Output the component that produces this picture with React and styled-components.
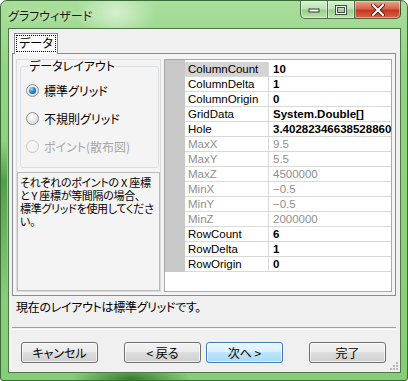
import React from "react";
import styled, { createGlobalStyle } from "styled-components";

const GlobalStyle = createGlobalStyle`
  html, body {
    margin: 0;
    padding: 0;
    background: #ffffff;
    overflow: hidden;
  }
  body {
    font-family: "Noto Sans CJK JP", "Liberation Sans", sans-serif;
  }
`;

const jp = `"Noto Sans CJK JP", "Liberation Sans", sans-serif`;
const latin = `"Liberation Sans", "Noto Sans CJK JP", sans-serif`;

const Window = styled.div`
  position: relative;
  width: 408px;
  height: 381px;
  box-sizing: border-box;
  display: flex;
  flex-direction: column;
  border: 1px solid #3c6a37;
  border-radius: 7px 7px 3px 3px;
  overflow: hidden;
  background:
    radial-gradient(ellipse 40px 26px at 115px 12px, rgba(255, 255, 255, 0.55), transparent),
    radial-gradient(ellipse 60px 14px at 130px 378px, rgba(20, 90, 20, 0.7), transparent),
    linear-gradient(180deg, transparent 140px, rgba(30, 120, 30, 0.55) 180px, transparent 300px) left / 6px 100% no-repeat,
    linear-gradient(180deg, #a9de9b 0%, #92d483 18%, #86cd77 100%);
`;

const TitleBar = styled.div`
  height: 27px;
  display: flex;
  align-items: flex-start;
  justify-content: space-between;
  padding-left: 7px;
`;

const Title = styled.div`
  font-family: ${jp};
  font-size: 12px;
  font-feature-settings: "palt" 1;
  line-height: 14px;
  margin-top: 8px;
  color: #1a1a1a;
  text-shadow: 0 0 6px rgba(255, 255, 255, 0.8);
`;

const Caption = styled.div`
  display: flex;
  margin-right: 6px;
`;

const CaptionButton = styled.div`
  height: 18px;
  width: ${(p) => p.$w}px;
  box-sizing: border-box;
  display: flex;
  align-items: center;
  justify-content: center;
  border: 1px solid rgba(40, 70, 40, 0.75);
  border-top: none;
  border-left-width: ${(p) => (p.$first ? 1 : 0)}px;
  border-radius: ${(p) => (p.$first ? "0 0 0 5px" : p.$last ? "0 0 5px 0" : "0")};
  background: ${(p) =>
    p.$close
      ? "linear-gradient(180deg, #e8a593 0%, #d7634b 45%, #c4361d 55%, #d3674c 100%)"
      : "linear-gradient(180deg, rgba(255,255,255,0.55) 0%, rgba(255,255,255,0.25) 45%, rgba(120,170,110,0.3) 55%, rgba(200,235,190,0.6) 100%)"};
  box-shadow: inset 0 0 0 1px rgba(255, 255, 255, 0.4);
`;

const Client = styled.div`
  position: relative;
  flex: 1;
  margin: 0 6px 7px 7px;
  border: 1px solid #4f7549;
  background: #f0f0f0;
  display: flex;
  flex-direction: column;
`;

const TabArea = styled.div`
  margin: 4px 4px 0 3px;
  display: flex;
  flex-direction: column;
`;

const TabStrip = styled.div`
  display: flex;
  padding-left: 2px;
  height: 20px;
`;

const Tab = styled.div`
  position: relative;
  z-index: 1;
  width: 44px;
  height: 21px;
  box-sizing: border-box;
  border: 1px solid #898c95;
  border-bottom: none;
  background: #fcfcfc;
  display: flex;
  align-items: flex-start;
  justify-content: center;
  padding-top: 2px;
`;

const TabLabel = styled.span`
  font-family: ${jp};
  font-size: 12px;
  font-feature-settings: "palt" 1;
  line-height: 14px;
  padding: 0 2px 1px;
  outline: 1px dotted #000;
  color: #000;
`;

const Panel = styled.div`
  height: 243px;
  box-sizing: border-box;
  border: 1px solid #898c95;
  background: #f4f4f4;
  display: flex;
  gap: 3px;
  padding: 5px 3px 3px 3px;
`;

const LeftPane = styled.div`
  width: 145px;
  box-sizing: border-box;
  border: 1px solid #dcdcdc;
  display: flex;
  flex-direction: column;
`;

const GroupBox = styled.fieldset`
  margin: 0 1px 0 3px;
  padding: 10px 0 0 5px;
  height: 108px;
  box-sizing: border-box;
  border: 1px solid #d5dfe5;
  border-radius: 3px;
  display: flex;
  flex-direction: column;
  gap: 12px;
`;

const Legend = styled.legend`
  font-family: ${jp};
  font-size: 12px;
  font-feature-settings: "palt" 1;
  line-height: 12px;
  padding: 0 1px;
  margin-left: 2px;
  color: #000;
`;

const RadioRow = styled.label`
  display: flex;
  align-items: center;
  gap: 5px;
  height: 16px;
  font-family: ${jp};
  font-size: 12px;
  font-feature-settings: "palt" 1;
  color: ${(p) => (p.$disabled ? "#a6a6a6" : "#000")};
`;

const Radio = styled.span`
  position: relative;
  width: 13px;
  height: 13px;
  box-sizing: border-box;
  border-radius: 50%;
  border: 1px solid ${(p) => (p.$disabled ? "#c8c8c8" : "#8e8f8f")};
  background: ${(p) =>
    p.$disabled
      ? "#f4f4f4"
      : "radial-gradient(circle at 40% 35%, #ffffff 0%, #e6e6e6 55%, #c8c8c8 100%)"};

  &::after {
    content: "";
    display: ${(p) => (p.$checked ? "block" : "none")};
    position: absolute;
    left: 2px;
    top: 2px;
    width: 7px;
    height: 7px;
    border-radius: 50%;
    background: radial-gradient(circle at 35% 30%, #a8d8f5 0%, #2f86c4 45%, #0e4b86 100%);
  }
`;

const Description = styled.div`
  flex: 1;
  margin-top: 4px;
  border: 1px solid #b9b9b9;
  padding: 3px 1px 0 2px;
  font-family: ${jp};
  font-size: 11px;
  font-feature-settings: "palt" 1;
  line-height: 13px;
  letter-spacing: -0.3px;
  color: #000;
  white-space: pre;
`;

const Grid = styled.div`
  flex: 1;
  box-sizing: border-box;
  border: 1px solid #a9a9a9;
  background: #ffffff;
  display: flex;
  flex-direction: column;
  overflow: hidden;
`;

const Rows = styled.div`
  padding-top: 2px;
  background: linear-gradient(90deg, #c8c8c8 20px, #ffffff 20px);
`;

const Row = styled.div`
  display: grid;
  grid-template-columns: 20px 84px 1fr;
  height: 15px;
`;

const Gutter = styled.div`
  background: #c8c8c8;
`;

const NameCell = styled.div`
  box-sizing: border-box;
  border-bottom: 1px solid #d9d9d9;
  border-right: 1px solid #d9d9d9;
  background: ${(p) => (p.$selected ? "#d4d4d4" : "#ffffff")};
  padding-left: 3px;
  font-family: ${latin};
  font-size: 11.5px;
  line-height: 14px;
  color: ${(p) => (p.$disabled ? "#8f8f8f" : "#000")};
  white-space: nowrap;
  overflow: hidden;
`;

const ValueCell = styled.div`
  box-sizing: border-box;
  border-bottom: 1px solid #d9d9d9;
  padding-left: 4px;
  font-family: ${latin};
  font-size: 11.5px;
  font-weight: ${(p) => (p.$disabled ? 400 : 700)};
  line-height: 14px;
  color: ${(p) => (p.$disabled ? "#8f8f8f" : "#000")};
  white-space: nowrap;
  overflow: hidden;
`;

const Status = styled.div`
  margin: 4px 0 0 7px;
  height: 14px;
  font-family: ${jp};
  font-size: 12px;
  font-feature-settings: "palt" 1;
  line-height: 14px;
  letter-spacing: -0.3px;
  color: #000;
`;

const Separator = styled.div`
  margin: 13px 4px 0 3px;
  height: 1px;
  border-top: 1px solid #a0a0a0;
  border-bottom: 1px solid #ffffff;
`;

const ButtonRow = styled.div`
  margin-top: 12px;
  padding: 0 14px 0 12px;
  display: flex;
  justify-content: space-between;
`;

const ButtonGroup = styled.div`
  display: flex;
  gap: 5px;
`;

const Button = styled.div`
  width: 77px;
  height: 21px;
  box-sizing: border-box;
  border: 1px solid ${(p) => (p.$default ? "#3c7fb1" : "#707070")};
  border-radius: 3px;
  box-shadow: inset 0 0 0 1px rgba(255, 255, 255, 0.7);
  background: ${(p) =>
    p.$default
      ? "linear-gradient(180deg, #eaf6fd 0%, #d9f0fc 50%, #bee6fd 50%, #a7d9f5 100%)"
      : "linear-gradient(180deg, #f2f2f2 0%, #ebebeb 50%, #dddddd 50%, #cfcfcf 100%)"};
  display: flex;
  align-items: center;
  justify-content: center;
  font-family: ${jp};
  font-size: 12px;
  font-feature-settings: "palt" 1;
  line-height: 14px;
  color: #000;
`;

const Grip = styled.svg`
  position: absolute;
  right: 1px;
  bottom: 1px;
`;

const properties = [
  { name: "ColumnCount", value: "10", selected: true },
  { name: "ColumnDelta", value: "1" },
  { name: "ColumnOrigin", value: "0" },
  { name: "GridData", value: "System.Double[]" },
  { name: "Hole", value: "3.40282346638528860E+38" },
  { name: "MaxX", value: "9.5", disabled: true },
  { name: "MaxY", value: "5.5", disabled: true },
  { name: "MaxZ", value: "4500000", disabled: true },
  { name: "MinX", value: "−0.5", disabled: true },
  { name: "MinY", value: "−0.5", disabled: true },
  { name: "MinZ", value: "2000000", disabled: true },
  { name: "RowCount", value: "6" },
  { name: "RowDelta", value: "1" },
  { name: "RowOrigin", value: "0" },
];

const App = () => {
  return (
    <>
      <GlobalStyle />
      <Window>
        <TitleBar>
          <Title>グラフウィザード</Title>
          <Caption>
            <CaptionButton $w={28} $first>
              <svg width="12" height="6" viewBox="0 0 12 6">
                <rect x="1" y="2" width="10" height="3" fill="#fff" stroke="#2d3d2d" strokeWidth="1" />
              </svg>
            </CaptionButton>
            <CaptionButton $w={27}>
              <svg width="12" height="10" viewBox="0 0 12 10">
                <rect x="1.5" y="1.5" width="9" height="7" fill="none" stroke="#2d3d2d" strokeWidth="3" />
                <rect x="1.5" y="1.5" width="9" height="7" fill="none" stroke="#fff" strokeWidth="1.2" />
              </svg>
            </CaptionButton>
            <CaptionButton $w={46} $last $close>
              <svg width="14" height="12" viewBox="0 0 14 12">
                <path d="M2 1 L12 11 M12 1 L2 11" stroke="#5a1d12" strokeWidth="4" strokeLinecap="square" />
                <path d="M2 1 L12 11 M12 1 L2 11" stroke="#fff" strokeWidth="2" strokeLinecap="square" />
              </svg>
            </CaptionButton>
          </Caption>
        </TitleBar>

        <Client>
          <TabArea>
            <TabStrip>
              <Tab>
                <TabLabel>データ</TabLabel>
              </Tab>
            </TabStrip>
            <Panel>
              <LeftPane>
                <GroupBox>
                  <Legend>データレイアウト</Legend>
                  <RadioRow>
                    <Radio $checked />
                    標準グリッド
                  </RadioRow>
                  <RadioRow>
                    <Radio />
                    不規則グリッド
                  </RadioRow>
                  <RadioRow $disabled>
                    <Radio $disabled />
                    ポイント(散布図)
                  </RadioRow>
                </GroupBox>
                <Description>
                  {"それぞれのポイントの X 座標\nと Y 座標が等間隔の場合、\n標準グリッドを使用してくださ\nい。"}
                </Description>
              </LeftPane>
              <Grid>
                <Rows>
                  {properties.map((p) => (
                    <Row key={p.name}>
                      <Gutter />
                      <NameCell $selected={p.selected} $disabled={p.disabled}>
                        {p.name}
                      </NameCell>
                      <ValueCell $disabled={p.disabled}>{p.value}</ValueCell>
                    </Row>
                  ))}
                </Rows>
              </Grid>
            </Panel>
          </TabArea>

          <Status>現在のレイアウトは標準グリッドです。</Status>
          <Separator />

          <ButtonRow>
            <Button>キャンセル</Button>
            <ButtonGroup>
              <Button>&lt; 戻る</Button>
              <Button $default>次へ &gt;</Button>
            </ButtonGroup>
            <Button>完了</Button>
          </ButtonRow>

          <Grip width="10" height="10" viewBox="0 0 10 10">
            {[
              [8, 2],
              [5, 5],
              [8, 5],
              [2, 8],
              [5, 8],
              [8, 8],
            ].map(([x, y]) => (
              <rect key={`${x}-${y}`} x={x - 1} y={y - 1} width="2" height="2" fill="#b8b8b8" />
            ))}
          </Grip>
        </Client>
      </Window>
    </>
  );
};

export default App;
